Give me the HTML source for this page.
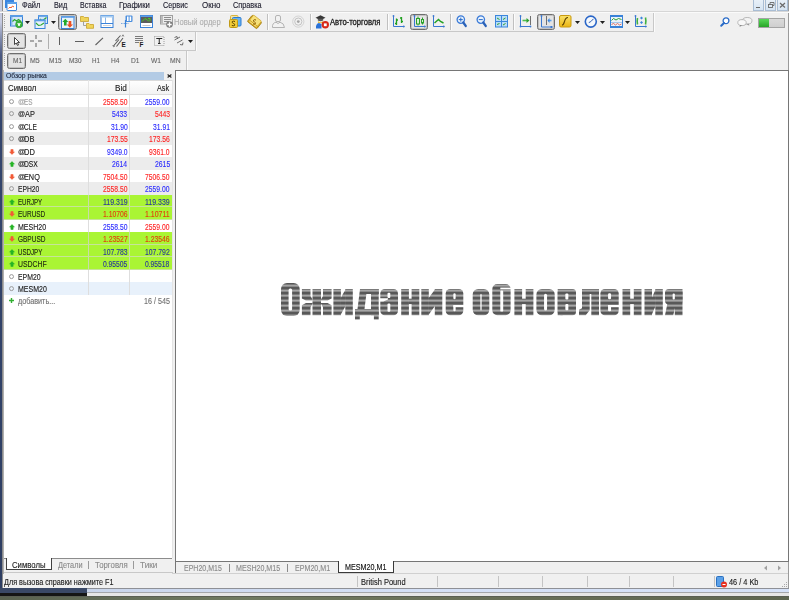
<!DOCTYPE html>
<html><head><meta charset="utf-8">
<style>
*{margin:0;padding:0;box-sizing:border-box}
html,body{width:789px;height:600px;overflow:hidden;background:#f0f0f0;font-family:"Liberation Sans",sans-serif;color:#000}
.a{position:absolute}
.t{position:absolute;white-space:nowrap;line-height:1;transform-origin:0 0;-webkit-text-stroke:0.12px currentColor}
svg.a{overflow:visible}
</style></head><body>

<div class="a" style="left:0;top:0;width:2px;height:589px;background:linear-gradient(#c6cbe0 0px,#c6cbe0 22px,#8a94b4 36px,#4a5880 55px,#34466e 120px,#2e3e62 589px)"></div>
<div class="a" style="left:2px;top:0px;width:1px;height:589px;background:#8c8c8c;"></div>
<div class="a" style="left:3px;top:13px;width:1px;height:576px;background:#e8e8e8;"></div>
<div class="a" style="left:0px;top:588px;width:789px;height:1px;background:#8e9096;"></div>
<div class="a" style="left:0;top:589px;width:789px;height:3px;background:linear-gradient(90deg,#c6d2e8,#d4e0f6 50%,#d6e2f8)"></div>
<div class="a" style="left:0px;top:592px;width:789px;height:1px;background:#a4a6aa;"></div>
<div class="a" style="left:0px;top:593px;width:789px;height:3px;background:#e6e6e6;"></div>
<div class="a" style="left:0px;top:588px;width:87px;height:5px;background:#3a4866;"></div>
<div class="a" style="left:0px;top:593px;width:87px;height:3px;background:#151515;"></div>
<div class="a" style="left:0px;top:596px;width:789px;height:1px;background:#5a5e52;"></div>
<div class="a" style="left:0;top:597px;width:789px;height:3px;background:linear-gradient(90deg,#5a6250,#707a60 30%,#6a7058 60%,#5e6650)"></div>
<div class="a" style="left:788px;top:0px;width:1px;height:588px;background:#9a9a9a;"></div>
<div class="a" style="left:0px;top:11px;width:789px;height:1px;background:#d6d6d6;"></div>
<div class="a" style="left:0px;top:12px;width:789px;height:1px;background:#fafafa;"></div>
<span class="t" style="left:22.19px;top:1.00px;font-size:8.43px;color:#1a1a2a;transform:scaleX(0.8890);">Файл</span>
<span class="t" style="left:53.62px;top:1.00px;font-size:8.43px;color:#1a1a2a;transform:scaleX(0.8671);">Вид</span>
<span class="t" style="left:79.93px;top:1.00px;font-size:8.43px;color:#1a1a2a;transform:scaleX(0.8419);">Вставка</span>
<span class="t" style="left:119.48px;top:1.00px;font-size:8.43px;color:#1a1a2a;transform:scaleX(0.9242);">Графики</span>
<span class="t" style="left:163.34px;top:1.00px;font-size:8.43px;color:#1a1a2a;transform:scaleX(0.8604);">Сервис</span>
<span class="t" style="left:201.84px;top:1.00px;font-size:8.43px;color:#1a1a2a;transform:scaleX(0.9426);">Окно</span>
<span class="t" style="left:233.33px;top:1.00px;font-size:8.43px;color:#1a1a2a;transform:scaleX(0.8674);">Справка</span>
<svg class="a" style="left:5px;top:0px;" width="12" height="11" viewBox="0 0 12 11">
<rect x="0" y="-3" width="9" height="11" fill="#3a86e0"/>
<rect x="2" y="2.5" width="9.5" height="8" rx="0.5" fill="#fff" stroke="#3a86e0" stroke-width="1"/>
<rect x="2" y="2" width="10" height="2" fill="#5aa0ea"/>
<path d="M3.5 8.5 L5 7 L6 8 L7.5 6 L9 7" stroke="#f06030" stroke-width="1" fill="none"/>
</svg>
<div class="a" style="left:753px;top:0px;width:11px;height:11px;background:linear-gradient(#e8f0f8,#d6e4f2);border:1px solid #a9bdd4;border-top:none"></div>
<div class="a" style="left:765px;top:0px;width:11px;height:11px;background:linear-gradient(#e8f0f8,#d6e4f2);border:1px solid #a9bdd4;border-top:none"></div>
<div class="a" style="left:777px;top:0px;width:11px;height:11px;background:linear-gradient(#e8f0f8,#d6e4f2);border:1px solid #a9bdd4;border-top:none"></div>
<svg class="a" style="left:753px;top:0px;" width="11" height="11" viewBox="0 0 11 11"><rect x="3" y="7" width="4" height="1" fill="#6a6a6a"/></svg>
<svg class="a" style="left:765px;top:0px;" width="11" height="11" viewBox="0 0 11 11"><rect x="3.5" y="4.5" width="4" height="3" fill="none" stroke="#6a6a6a" stroke-width="0.9"/><path d="M5 4.5 V2.5 H9 V5.5 H7.5" fill="none" stroke="#6a6a6a" stroke-width="0.9"/></svg>
<svg class="a" style="left:777px;top:0px;" width="11" height="11" viewBox="0 0 11 11"><path d="M3 3 L8 7.5 M8 3 L3 7.5" stroke="#6a6a6a" stroke-width="1.2"/></svg>
<div class="a" style="left:3px;top:13px;width:650px;height:18px;background:#f0f0f0;"></div>
<div class="a" style="left:653px;top:13px;width:1px;height:19px;background:#c8c8c8;"></div>
<div class="a" style="left:654px;top:13px;width:1px;height:19px;background:#fbfbfb;"></div>
<div class="a" style="left:3px;top:31px;width:650px;height:1px;background:#c8c8c8;"></div>
<div class="a" style="left:195px;top:32px;width:1px;height:19px;background:#c8c8c8;"></div>
<div class="a" style="left:196px;top:32px;width:1px;height:19px;background:#fbfbfb;"></div>
<div class="a" style="left:3px;top:50px;width:192px;height:1px;background:#c8c8c8;"></div>
<div class="a" style="left:186px;top:51px;width:1px;height:19px;background:#c8c8c8;"></div>
<div class="a" style="left:187px;top:51px;width:1px;height:19px;background:#fbfbfb;"></div>
<div class="a" style="left:4px;top:15px;width:1px;height:1px;background:#a8a8a8;"></div>
<div class="a" style="left:4px;top:17px;width:1px;height:1px;background:#a8a8a8;"></div>
<div class="a" style="left:4px;top:19px;width:1px;height:1px;background:#a8a8a8;"></div>
<div class="a" style="left:4px;top:21px;width:1px;height:1px;background:#a8a8a8;"></div>
<div class="a" style="left:4px;top:23px;width:1px;height:1px;background:#a8a8a8;"></div>
<div class="a" style="left:4px;top:25px;width:1px;height:1px;background:#a8a8a8;"></div>
<div class="a" style="left:4px;top:27px;width:1px;height:1px;background:#a8a8a8;"></div>
<div class="a" style="left:4px;top:34px;width:1px;height:1px;background:#a8a8a8;"></div>
<div class="a" style="left:4px;top:36px;width:1px;height:1px;background:#a8a8a8;"></div>
<div class="a" style="left:4px;top:38px;width:1px;height:1px;background:#a8a8a8;"></div>
<div class="a" style="left:4px;top:40px;width:1px;height:1px;background:#a8a8a8;"></div>
<div class="a" style="left:4px;top:42px;width:1px;height:1px;background:#a8a8a8;"></div>
<div class="a" style="left:4px;top:44px;width:1px;height:1px;background:#a8a8a8;"></div>
<div class="a" style="left:4px;top:46px;width:1px;height:1px;background:#a8a8a8;"></div>
<div class="a" style="left:4px;top:53px;width:1px;height:1px;background:#a8a8a8;"></div>
<div class="a" style="left:4px;top:55px;width:1px;height:1px;background:#a8a8a8;"></div>
<div class="a" style="left:4px;top:57px;width:1px;height:1px;background:#a8a8a8;"></div>
<div class="a" style="left:4px;top:59px;width:1px;height:1px;background:#a8a8a8;"></div>
<div class="a" style="left:4px;top:61px;width:1px;height:1px;background:#a8a8a8;"></div>
<div class="a" style="left:4px;top:63px;width:1px;height:1px;background:#a8a8a8;"></div>
<div class="a" style="left:4px;top:65px;width:1px;height:1px;background:#a8a8a8;"></div>
<svg class="a" style="left:9px;top:15px;" width="16" height="14" viewBox="0 0 16 14">
<rect x="1.5" y="0.5" width="12" height="10.5" fill="#d4e6f8" stroke="#3a82d8"/>
<rect x="1" y="0" width="13" height="2" fill="#5a9ce4"/>
<rect x="2" y="2" width="1.5" height="8.5" fill="#8ab8ea"/>
<path d="M3.5 6.5 L5.5 4.5 L7.5 6 L9.5 4.5 L12 6.5" stroke="#2ea82e" stroke-width="1.1" fill="none"/>
<circle cx="10" cy="9.4" r="3.4" fill="#3cb43c" stroke="#2a9a2a" stroke-width="0.6"/>
<path d="M8 8.3 H12 L10.8 9.8 V11 H9.2 V9.8 Z" fill="#fff"/>
</svg>
<svg class="a" style="left:25px;top:21px;" width="5" height="3" viewBox="0 0 5 3"><path d="M0 0 H5 L2.5 3 Z" fill="#202020"/></svg>
<svg class="a" style="left:34px;top:15px;" width="15" height="14" viewBox="0 0 15 14">
<rect x="4.5" y="0.5" width="9" height="8" fill="#d4e6f8" stroke="#3a82d8"/>
<rect x="4" y="0" width="10" height="1.8" fill="#5a9ce4"/>
<path d="M6 4 L8 6 L12.5 2.5" stroke="#2ea82e" stroke-width="1.1" fill="none"/>
<rect x="1" y="5" width="10" height="8.5" fill="#e6f1fc" stroke="#3a82d8"/>
<rect x="0.5" y="4.5" width="11" height="1.8" fill="#5a9ce4"/>
<path d="M2 8 L4.5 10.5 L7 10 L10 8" stroke="#2ea82e" stroke-width="1.1" fill="none"/>
</svg>
<svg class="a" style="left:51px;top:21px;" width="5" height="3" viewBox="0 0 5 3"><path d="M0 0 H5 L2.5 3 Z" fill="#202020"/></svg>
<div class="a" style="left:58px;top:14px;width:19px;height:16px;border:1px solid #6e6e6e;border-radius:2.5px;background:#e4e4e4;box-shadow:inset 0 0 0 1px #c2c2c2"></div>
<svg class="a" style="left:61px;top:16px;" width="14" height="13" viewBox="0 0 14 13">
<rect x="0.5" y="0.5" width="12.5" height="12" fill="#eaf3fc" stroke="#3a82d8"/>
<rect x="0" y="0" width="13.5" height="1.8" fill="#5a9ce4"/>
<path d="M4.3 2.8 L7.3 6 H5.6 V9.5 H3 V6 H1.3 Z" fill="#22a82a"/>
<path d="M8.8 11.8 L12 8.5 H10.3 V5 H7.6 V8.5 H5.8 Z" fill="#ec5022"/>
</svg>
<svg class="a" style="left:80px;top:15px;" width="14" height="14" viewBox="0 0 14 14">
<path d="M0.5 1.5 H3.5 L4.5 2.5 H8.5 V6.5 H0.5 Z" fill="#f0d458" stroke="#c9a22a" stroke-width="0.8"/>
<path d="M3.5 6.5 V10.5 H6" stroke="#a0a0a0" stroke-width="1" fill="none"/>
<path d="M6.5 8.5 H9 L10 9.5 H13.5 V13.3 H6.5 Z" fill="#f0d458" stroke="#c9a22a" stroke-width="0.8"/>
</svg>
<svg class="a" style="left:100px;top:15px;" width="14" height="13" viewBox="0 0 14 13">
<rect x="1" y="0.5" width="12" height="12" fill="#fff" stroke="#3a82d8"/>
<rect x="1" y="0.5" width="12" height="2" fill="#a8cdf2"/>
<rect x="5" y="2.5" width="1" height="5.5" fill="#8ab8ea"/>
<rect x="1" y="8" width="12" height="1" fill="#3a82d8"/>
<rect x="3" y="10" width="8" height="1" fill="#d4d4d4"/>
</svg>
<svg class="a" style="left:120px;top:15px;" width="14" height="14" viewBox="0 0 14 14">
<rect x="5.5" y="0.5" width="7" height="6.5" rx="1" fill="#4a8ede"/>
<rect x="7" y="1.5" width="1.6" height="4.5" fill="#fff"/><rect x="9.6" y="1.5" width="1.6" height="4.5" fill="#fff"/>
<path d="M1 8.5 H9" stroke="#7aa8e0" stroke-width="1" stroke-dasharray="1.5 1"/>
<path d="M5.5 5 V12.5" stroke="#3a82d8" stroke-width="1.2"/>
</svg>
<svg class="a" style="left:140px;top:15px;" width="13" height="13" viewBox="0 0 13 13">
<rect x="0.5" y="0.5" width="12" height="12" fill="#fff" stroke="#3a82d8"/>
<rect x="0.5" y="0.5" width="12" height="1.5" fill="#5a9ce4"/>
<rect x="1" y="2" width="11" height="6" fill="#5c5c5c"/>
<path d="M2 6.5 L5 3.5 L7.5 5 L9 6.5 M8 3.5 H10 V6" stroke="#44cc22" stroke-width="1" fill="none"/>
<rect x="2.5" y="10" width="8" height="1" fill="#c8c8c8"/>
</svg>
<svg class="a" style="left:159px;top:14px;" width="15" height="15" viewBox="0 0 15 15">
<rect x="1.5" y="1.5" width="12" height="8.5" fill="#ececec" stroke="#a0a0a0"/>
<rect x="2" y="2" width="2" height="7.5" fill="#bcbcbc"/>
<path d="M5 3.5 H12 M5 5.5 H12 M5 7.5 H10" stroke="#8c8c8c" stroke-width="1"/>
<circle cx="10.5" cy="10.5" r="3.3" fill="#7c7c7c"/>
<path d="M10.5 8.3 V12.7 M8.3 10.5 H12.7" stroke="#fff" stroke-width="1.3"/>
</svg>
<span class="t" style="left:173.89px;top:19.00px;font-size:8.14px;color:#aeaeae;transform:scaleX(0.9372);">Новый ордер</span>
<svg class="a" style="left:229px;top:15px;" width="13" height="13" viewBox="0 0 13 13">
<rect x="1.5" y="0.5" width="7.5" height="6" rx="1" fill="#f6e4a0" stroke="#d8b440"/>
<rect x="3.5" y="2.5" width="8.5" height="8.5" rx="1" fill="#6ab4f0" stroke="#2a7ad0"/>
<rect x="0.5" y="4.5" width="8" height="8" rx="1" fill="#f2cc38" stroke="#c09a18"/>
<path d="M6 6.5 Q4.5 5.8 3.3 6.5 Q2.5 7.5 4.5 8.5 Q6.5 9.3 5.5 10.5 Q4.3 11.2 2.8 10.4" stroke="#5a4500" stroke-width="1" fill="none"/>
</svg>
<svg class="a" style="left:247px;top:15px;" width="15" height="14" viewBox="0 0 15 14">
<g transform="rotate(38 7.5 7)">
<rect x="1.5" y="3" width="12" height="8" rx="1" fill="#d8a820" stroke="#a07a08" stroke-width="0.8"/>
<rect x="2.5" y="2" width="10" height="6.5" rx="0.8" fill="#f6e07a" stroke="#c89a18" stroke-width="0.6"/>
<path d="M3 9.5 H12" stroke="#fff3b0" stroke-width="0.8"/>
</g>
<path d="M9 5 Q7.3 4.2 6.5 5.3 Q6 6.5 7.6 7 Q9 7.6 8.2 8.8 Q7.2 9.6 6 8.9" stroke="#8a5a00" stroke-width="1" fill="none"/>
</svg>
<div class="a" style="left:267px;top:14px;width:1px;height:16px;background:#c0c0c0;"></div>
<div class="a" style="left:268px;top:14px;width:1px;height:16px;background:#fcfcfc;"></div>
<svg class="a" style="left:271px;top:15px;" width="15" height="13" viewBox="0 0 15 13">
<rect x="4.5" y="0.5" width="5" height="6" rx="1.5" fill="#f2f2f2" stroke="#b4b4b4"/>
<path d="M1.5 12.5 Q1 8 5 7.2 L7 8.5 L9 7.2 Q13 8 13.5 12.5 Z" fill="#f2f2f2" stroke="#b4b4b4"/>
</svg>
<svg class="a" style="left:292px;top:15px;" width="13" height="13" viewBox="0 0 13 13">
<circle cx="6.3" cy="6.6" r="5.6" fill="none" stroke="#cfcfcf" stroke-width="0.9"/>
<circle cx="6.3" cy="6.6" r="3.6" fill="none" stroke="#bdbdbd" stroke-width="0.9"/>
<circle cx="6.3" cy="6.6" r="1.4" fill="#a4a4a4"/>
</svg>
<div class="a" style="left:310px;top:14px;width:1px;height:16px;background:#c0c0c0;"></div>
<div class="a" style="left:311px;top:14px;width:1px;height:16px;background:#fcfcfc;"></div>
<svg class="a" style="left:315px;top:15px;" width="15" height="14" viewBox="0 0 15 14">
<path d="M0.5 2.8 L5.5 0.3 L10.5 2.8 L5.5 5.3 Z" fill="#383838"/>
<path d="M2.8 3.8 V5.6 Q5.5 7 8.2 5.6 V3.8" fill="#5a5a5a"/>
<path d="M3 6 Q5.5 8.5 8 6 V8 H3 Z" fill="#e8c040"/>
<path d="M1 13.5 Q0.5 8.5 4 8 L6.5 9 L6.5 13.5 Z" fill="#2a72d8"/>
<circle cx="10.3" cy="9.8" r="3.7" fill="#d82818"/>
<rect x="8.9" y="8.4" width="2.8" height="2.8" fill="#fff"/>
</svg>
<span class="t" style="left:330.40px;top:18.00px;font-size:8.43px;color:#1a1a1a;transform:scaleX(0.9058);-webkit-text-stroke:0.3px currentColor">Авто-торговля</span>
<div class="a" style="left:387px;top:14px;width:1px;height:16px;background:#c0c0c0;"></div>
<div class="a" style="left:388px;top:14px;width:1px;height:16px;background:#fcfcfc;"></div>
<svg class="a" style="left:392px;top:15px;" width="14" height="14" viewBox="0 0 14 14"><path d="M1.5 1 V11.5 H12" stroke="#3a78d0" stroke-width="1" fill="none"/><circle cx="1.5" cy="1" r="0.9" fill="#3a78d0"/><path d="M11.5 10 L13 11.5 L11.5 13 Z" fill="#3a78d0"/>
<path d="M4.5 3.5 V10 M3 8.5 H4.5 M4.5 5 H6 M9.5 2 V8 M8 3 H9.5 M9.5 6.5 H11" stroke="#22a022" stroke-width="1.3" fill="none"/>
</svg>
<div class="a" style="left:410px;top:14px;width:18px;height:16px;border:1px solid #6e6e6e;border-radius:2.5px;background:#e4e4e4;box-shadow:inset 0 0 0 1px #c2c2c2"></div>
<svg class="a" style="left:413px;top:15px;" width="14" height="14" viewBox="0 0 14 14"><path d="M1.5 1 V11.5 H12" stroke="#3a78d0" stroke-width="1" fill="none"/><circle cx="1.5" cy="1" r="0.9" fill="#3a78d0"/><path d="M11.5 10 L13 11.5 L11.5 13 Z" fill="#3a78d0"/>
<rect x="3.5" y="3.5" width="3" height="5.5" fill="#d8f2d0" stroke="#2aa02a"/>
<path d="M5 1.5 V3.5 M5 9 V10.5" stroke="#2aa02a"/>
<rect x="8.5" y="4.5" width="2" height="3.5" fill="#d8f2d0" stroke="#2aa02a"/>
<path d="M9.5 2.5 V4.5 M9.5 8 V9.5" stroke="#2aa02a"/>
</svg>
<svg class="a" style="left:432px;top:15px;" width="14" height="14" viewBox="0 0 14 14"><path d="M1.5 1 V11.5 H12" stroke="#3a78d0" stroke-width="1" fill="none"/><circle cx="1.5" cy="1" r="0.9" fill="#3a78d0"/><path d="M11.5 10 L13 11.5 L11.5 13 Z" fill="#3a78d0"/>
<path d="M2.5 8 L6.5 4.5 L8.5 6.5 L11.5 8" stroke="#22a022" stroke-width="1.4" fill="none"/>
</svg>
<div class="a" style="left:450px;top:14px;width:1px;height:16px;background:#c0c0c0;"></div>
<div class="a" style="left:451px;top:14px;width:1px;height:16px;background:#fcfcfc;"></div>
<svg class="a" style="left:456px;top:15px;" width="12" height="13" viewBox="0 0 12 13">
<circle cx="4.8" cy="4.6" r="3.7" fill="#e8f2fc" stroke="#3a7ad8" stroke-width="1.3"/>
<path d="M7.3 7.5 L9.8 11" stroke="#2a62b8" stroke-width="2.2" stroke-linecap="round"/>
<path d="M2.8 4.6 H6.8 M4.8 2.6 V6.6" stroke="#2a6cc8" stroke-width="1"/>
</svg>
<svg class="a" style="left:476px;top:15px;" width="12" height="13" viewBox="0 0 12 13">
<circle cx="4.8" cy="4.6" r="3.7" fill="#e8f2fc" stroke="#3a7ad8" stroke-width="1.3"/>
<path d="M7.3 7.5 L9.8 11" stroke="#2a62b8" stroke-width="2.2" stroke-linecap="round"/>
<path d="M2.8 4.6 H6.8" stroke="#2a6cc8" stroke-width="1"/>
</svg>
<svg class="a" style="left:495px;top:15px;" width="13" height="13" viewBox="0 0 13 13">
<rect x="0" y="0" width="13" height="12.5" fill="#3a86dc"/>
<rect x="1" y="1" width="5" height="5" fill="#b8dcf8"/><rect x="7" y="1" width="5" height="5" fill="#b8dcf8"/>
<rect x="1" y="7" width="5" height="4.5" fill="#b8dcf8"/><rect x="7" y="7" width="5" height="4.5" fill="#b8dcf8"/>
<path d="M2 3 L4.5 4.5 M8 4.5 L10.5 3 M2 9.5 L4.5 8.5 M8 10 L10.5 8.5" stroke="#30a030" stroke-width="1"/>
</svg>
<div class="a" style="left:513px;top:14px;width:1px;height:16px;background:#c0c0c0;"></div>
<div class="a" style="left:514px;top:14px;width:1px;height:16px;background:#fcfcfc;"></div>
<svg class="a" style="left:519px;top:15px;" width="14" height="14" viewBox="0 0 14 14">
<path d="M1.5 1 V11.5 H11.5" stroke="#3a78d0" stroke-width="1" fill="none"/><circle cx="1.5" cy="1" r="0.9" fill="#3a78d0"/><circle cx="1.5" cy="11.5" r="0.9" fill="#3a78d0"/><circle cx="11.5" cy="11.5" r="0.9" fill="#3a78d0"/>
<path d="M11.5 1 V10" stroke="#707070" stroke-width="1"/>
<path d="M3.5 5.5 H8.5" stroke="#50c050" stroke-width="1.6"/><path d="M7.5 3 L10.5 5.5 L7.5 8 Z" fill="#30a030"/>
</svg>
<div class="a" style="left:537px;top:14px;width:18px;height:16px;border:1px solid #6e6e6e;border-radius:2.5px;background:#e4e4e4;box-shadow:inset 0 0 0 1px #c2c2c2"></div>
<svg class="a" style="left:540px;top:15px;" width="14" height="14" viewBox="0 0 14 14">
<path d="M1.5 1 V12 H12" stroke="#3a78d0" stroke-width="1" fill="none"/><circle cx="1.5" cy="1" r="0.9" fill="#3a78d0"/><rect x="10.5" y="11" width="2" height="2" fill="#3a78d0"/>
<path d="M6.5 1 V10" stroke="#707070" stroke-width="1"/>
<path d="M8.5 5.5 H11.5" stroke="#5aa0ea" stroke-width="1.6"/><path d="M9.5 3 L7.5 5.5 L9.5 8 Z" fill="#3a86dc"/>
</svg>
<svg class="a" style="left:559px;top:15px;" width="13" height="13" viewBox="0 0 13 13">
<defs><linearGradient id="gf" x1="0" y1="0" x2="0" y2="1"><stop offset="0" stop-color="#fae26a"/><stop offset="1" stop-color="#eab410"/></linearGradient></defs>
<rect x="0.5" y="0.5" width="11.5" height="11.5" rx="1.5" fill="url(#gf)" stroke="#c89a10"/>
<path d="M3 10 Q4.5 10 5.5 6.5 Q6.5 2.5 9 2.5" stroke="#5a4000" stroke-width="1.1" fill="none"/>
</svg>
<svg class="a" style="left:575px;top:21px;" width="5" height="3" viewBox="0 0 5 3"><path d="M0 0 H5 L2.5 3 Z" fill="#202020"/></svg>
<svg class="a" style="left:584px;top:15px;" width="14" height="14" viewBox="0 0 14 14">
<circle cx="6.8" cy="6.6" r="5.5" fill="#f4f8fc" stroke="#2a66c8" stroke-width="1.6"/>
<path d="M6.8 6.6 L9.5 3.8 M6.8 6.6 L4.8 7.6" stroke="#2a5ab0" stroke-width="1"/>
</svg>
<svg class="a" style="left:600px;top:21px;" width="5" height="3" viewBox="0 0 5 3"><path d="M0 0 H5 L2.5 3 Z" fill="#202020"/></svg>
<svg class="a" style="left:610px;top:15px;" width="13" height="13" viewBox="0 0 13 13">
<rect x="0.5" y="0.5" width="12" height="12" fill="#eaf2fa" stroke="#3a82d8"/>
<rect x="0.5" y="0.5" width="12" height="1.5" fill="#3a82d8"/>
<path d="M1.5 5.5 L3.5 3.5 L6 5 L8.5 3.5 L11.5 4.5" stroke="#30a030" stroke-width="1" fill="none"/>
<path d="M1 7.5 H12" stroke="#a8c8e8" stroke-width="1"/>
<path d="M1.5 9.5 L3.5 8.5 L5.5 10 L7.5 8.5 L9.5 10 L11.5 9" stroke="#e06050" stroke-width="0.9" fill="none"/>
<rect x="0.5" y="11" width="12" height="1.5" fill="#3a82d8"/>
</svg>
<svg class="a" style="left:625px;top:21px;" width="5" height="3" viewBox="0 0 5 3"><path d="M0 0 H5 L2.5 3 Z" fill="#202020"/></svg>
<svg class="a" style="left:634px;top:15px;" width="14" height="14" viewBox="0 0 14 14">
<path d="M1.5 1 V11.5 H12" stroke="#3a78d0" stroke-width="1" fill="none"/><circle cx="1.5" cy="1" r="0.9" fill="#3a78d0"/><path d="M11.5 10 L13 11.5 L11.5 13 Z" fill="#3a78d0"/>
<path d="M3.5 3 Q2.8 6 3.5 9.5" stroke="#40b040" stroke-width="1.6" fill="none"/>
<path d="M11.5 2.5 Q12.3 6 11.5 9.5" stroke="#40b040" stroke-width="1.6" fill="none"/>
<path d="M7.5 1.5 L9 3 L7.5 4.5 L6 3 Z M7.5 6 L9 7.5 L7.5 9 L6 7.5 Z" fill="#3a86dc"/>
</svg>
<svg class="a" style="left:720px;top:17px;" width="10" height="10" viewBox="0 0 10 10">
<circle cx="6" cy="3.8" r="2.9" fill="#fff" stroke="#2a6cc8" stroke-width="1.3"/>
<path d="M4 6 L1.2 8.8" stroke="#2a6cc8" stroke-width="2" stroke-linecap="round"/>
</svg>
<svg class="a" style="left:737px;top:17px;" width="16" height="10" viewBox="0 0 16 10">
<ellipse cx="10.2" cy="3.8" rx="4.8" ry="3.3" fill="#f4f4f4" stroke="#a8a8a8" stroke-width="0.8"/>
<path d="M11.5 6.8 L12.3 8.8 L9.5 7" fill="#8a8a8a"/>
<ellipse cx="5" cy="5.6" rx="4.2" ry="3" fill="#f8f8f8" stroke="#a8a8a8" stroke-width="0.8"/>
<path d="M3 8.3 L2.6 9.8 L5 8.5" fill="#707070"/>
</svg>
<div class="a" style="left:758px;top:18px;width:27px;height:10px;background:linear-gradient(#dadada,#cfcfcf);border:1px solid #a4a4a4"></div>
<div class="a" style="left:759px;top:19px;width:10px;height:8px;background:linear-gradient(#58d858,#28a428)"></div>
<div class="a" style="left:7px;top:33px;width:19px;height:16px;border:1px solid #6e6e6e;border-radius:2.5px;background:#e4e4e4;box-shadow:inset 0 0 0 1px #c2c2c2"></div>
<svg class="a" style="left:13px;top:37px;" width="8" height="9" viewBox="0 0 8 9"><path d="M1.5 0.5 V7.5 L3.2 6 L4.5 8.5 L5.5 8 L4.4 5.5 H6.5 Z" fill="#fff" stroke="#303030" stroke-width="0.9"/></svg>
<svg class="a" style="left:29px;top:34px;" width="14" height="14" viewBox="0 0 14 14"><path d="M1 7 H5 M9 7 H13 M7 1 V5 M7 9 V13" stroke="#606060" stroke-width="1"/></svg>
<div class="a" style="left:48px;top:34px;width:1px;height:15px;background:#b0b0b0;"></div>
<div class="a" style="left:59px;top:37px;width:1px;height:8px;background:#606060;"></div>
<div class="a" style="left:75px;top:41px;width:9px;height:1px;background:#606060;"></div>
<svg class="a" style="left:95px;top:37px;" width="9" height="9" viewBox="0 0 9 9"><path d="M0.5 8 L8 0.8" stroke="#606060" stroke-width="1.1"/></svg>
<svg class="a" style="left:112px;top:34px;" width="15" height="13" viewBox="0 0 15 13">
<path d="M1.5 12 L7 5.5 M4.5 12.5 L11 4 M3.5 7 L8.5 1.5" stroke="#5a5a5a" stroke-width="1.1"/>
<path d="M10 2.5 L11 0.8 L11.8 2.5 M0.8 11 L1.5 12.8 L3 12" stroke="#6a6a6a" stroke-width="0.8" fill="none"/>
<text x="9.6" y="12.7" font-size="6.4" font-weight="bold" font-family="Liberation Sans" fill="#1a1a1a">E</text>
</svg>
<svg class="a" style="left:134px;top:35px;" width="11" height="12" viewBox="0 0 11 12">
<path d="M1 1.5 H9 M1 3.5 H9 M1 5.5 H9 M1 7.5 H5" stroke="#7a7a7a" stroke-width="1"/>
<text x="5.6" y="11.7" font-size="6.4" font-weight="bold" font-family="Liberation Sans" fill="#1a1a1a">F</text>
</svg>
<svg class="a" style="left:154px;top:36px;" width="11" height="10" viewBox="0 0 11 10">
<path d="M0.5 0.5 H10 V9.5 H0.5 Z" fill="none" stroke="#9a9a9a" stroke-width="1" stroke-dasharray="1 1"/>
<path d="M2.5 3 V2.5 H8 V3 M5.25 2.5 V7.5 M4 7.5 H6.5" stroke="#2a2a2a" stroke-width="1" fill="none"/>
</svg>
<svg class="a" style="left:174px;top:36px;" width="10" height="10" viewBox="0 0 10 10">
<path d="M0.5 1.5 L3 0.5 L3.5 3 M0.5 4 L6 1 M3 7 L8.5 4 M6 8.5 L8.5 9 L9 6.5" stroke="#606060" stroke-width="0.9" fill="none"/>
</svg>
<svg class="a" style="left:188px;top:40px;" width="5" height="3" viewBox="0 0 5 3"><path d="M0 0 H5 L2.5 3 Z" fill="#202020"/></svg>
<div class="a" style="left:7px;top:53px;width:19px;height:16px;border:1px solid #6e6e6e;border-radius:2.5px;background:#e4e4e4;box-shadow:inset 0 0 0 1px #c2c2c2"></div>
<span class="t" style="left:12.68px;top:57.00px;font-size:7.70px;color:#646464;transform:scaleX(0.8517);">M1</span>
<span class="t" style="left:30.44px;top:57.00px;font-size:7.70px;color:#646464;transform:scaleX(0.9097);">M5</span>
<span class="t" style="left:49.47px;top:57.00px;font-size:7.70px;color:#646464;transform:scaleX(0.8536);">M15</span>
<span class="t" style="left:69.38px;top:57.00px;font-size:7.70px;color:#646464;transform:scaleX(0.8370);">M30</span>
<span class="t" style="left:91.70px;top:57.00px;font-size:7.70px;color:#646464;transform:scaleX(0.8127);">H1</span>
<span class="t" style="left:111.07px;top:57.00px;font-size:7.70px;color:#646464;transform:scaleX(0.8580);">H4</span>
<span class="t" style="left:131.26px;top:57.00px;font-size:7.70px;color:#646464;transform:scaleX(0.8692);">D1</span>
<span class="t" style="left:150.67px;top:57.00px;font-size:7.70px;color:#646464;transform:scaleX(0.8684);">W1</span>
<span class="t" style="left:170.36px;top:57.00px;font-size:7.70px;color:#646464;transform:scaleX(0.8840);">MN</span>
<div class="a" style="left:3px;top:70px;width:1px;height:504px;background:#b0b0b0;"></div>
<div class="a" style="left:4px;top:72px;width:160px;height:8px;background:#b3cbe5;"></div>
<span class="t" style="left:5.59px;top:72.00px;font-size:7.27px;color:#1c2438;transform:scaleX(0.9366);">Обзор рынка</span>
<svg class="a" style="left:166px;top:73px;" width="7" height="6" viewBox="0 0 7 6"><path d="M1.6 1.5 L5.4 4.5 M5.4 1.5 L1.6 4.5" stroke="#282828" stroke-width="1.15"/></svg>
<div class="a" style="left:4px;top:80px;width:168px;height:478px;background:#ffffff;"></div>
<div class="a" style="left:172px;top:80px;width:1px;height:478px;background:#e4e4e4;"></div>
<div class="a" style="left:4px;top:80px;width:168px;height:14px;background:linear-gradient(#ffffff,#f3f3f3)"></div>
<div class="a" style="left:4px;top:80px;width:168px;height:1px;background:#dadada;"></div>
<div class="a" style="left:4px;top:94px;width:168px;height:1px;background:#dcdcdc;"></div>
<div class="a" style="left:88px;top:80px;width:1px;height:14px;background:#e6e6e6;"></div>
<div class="a" style="left:129px;top:80px;width:1px;height:14px;background:#e6e6e6;"></div>
<span class="t" style="left:8.31px;top:84.00px;font-size:8.72px;color:#1a1a1a;transform:scaleX(0.9002);">Символ</span>
<span class="t" style="left:114.64px;top:84.00px;font-size:8.72px;color:#1a1a1a;transform:scaleX(0.9438);">Bid</span>
<span class="t" style="left:157.00px;top:84.00px;font-size:8.72px;color:#1a1a1a;transform:scaleX(0.8264);">Ask</span>
<div class="a" style="left:4px;top:95px;width:168px;height:12px;background:#ffffff;"></div>
<div class="a" style="left:88px;top:95px;width:1px;height:12px;background:#dedede;"></div>
<div class="a" style="left:129px;top:95px;width:1px;height:12px;background:#dedede;"></div>
<span class="t" style="left:17.64px;top:98px;font-size:7.28px;color:#a0a0a0;transform:scaleX(0.969)">@</span>
<span class="t" style="left:24.29px;top:99.00px;font-size:8.14px;color:#a0a0a0;transform:scaleX(0.7851);">ES</span>
<span class="t" style="left:102.98px;top:99.00px;font-size:8.14px;color:#ff2222;transform:scaleX(0.8311);">2558.50</span>
<span class="t" style="left:145.38px;top:99.00px;font-size:8.14px;color:#2a2aff;transform:scaleX(0.8311);">2559.00</span>
<svg class="a" style="left:9px;top:98.8px;" width="6" height="6" viewBox="0 0 6 6"><circle cx="2.5" cy="2.6" r="2" fill="none" stroke="#9a9a9a" stroke-width="1"/></svg>
<div class="a" style="left:4px;top:107px;width:168px;height:13px;background:#ececec;"></div>
<div class="a" style="left:88px;top:107px;width:1px;height:13px;background:#dedede;"></div>
<div class="a" style="left:129px;top:107px;width:1px;height:13px;background:#dedede;"></div>
<span class="t" style="left:17.64px;top:110px;font-size:7.28px;color:#1a1a1a;transform:scaleX(0.969)">@</span>
<span class="t" style="left:24.80px;top:111.00px;font-size:8.14px;color:#1a1a1a;transform:scaleX(0.9022);">AP</span>
<span class="t" style="left:112.31px;top:111.00px;font-size:8.14px;color:#2a2aff;transform:scaleX(0.8374);">5433</span>
<span class="t" style="left:154.71px;top:111.00px;font-size:8.14px;color:#ff2222;transform:scaleX(0.8374);">5443</span>
<svg class="a" style="left:9px;top:111.28px;" width="6" height="6" viewBox="0 0 6 6"><circle cx="2.5" cy="2.6" r="2" fill="none" stroke="#9a9a9a" stroke-width="1"/></svg>
<div class="a" style="left:4px;top:120px;width:168px;height:12px;background:#ffffff;"></div>
<div class="a" style="left:88px;top:120px;width:1px;height:12px;background:#dedede;"></div>
<div class="a" style="left:129px;top:120px;width:1px;height:12px;background:#dedede;"></div>
<span class="t" style="left:17.64px;top:123px;font-size:7.28px;color:#1a1a1a;transform:scaleX(0.969)">@</span>
<span class="t" style="left:24.47px;top:124.00px;font-size:8.14px;color:#1a1a1a;transform:scaleX(0.8080);">CLE</span>
<span class="t" style="left:110.61px;top:124.00px;font-size:8.14px;color:#2a2aff;transform:scaleX(0.8268);">31.90</span>
<span class="t" style="left:153.01px;top:124.00px;font-size:8.14px;color:#2a2aff;transform:scaleX(0.8302);">31.91</span>
<svg class="a" style="left:9px;top:123.75999999999999px;" width="6" height="6" viewBox="0 0 6 6"><circle cx="2.5" cy="2.6" r="2" fill="none" stroke="#9a9a9a" stroke-width="1"/></svg>
<div class="a" style="left:4px;top:132px;width:168px;height:13px;background:#ececec;"></div>
<div class="a" style="left:88px;top:132px;width:1px;height:13px;background:#dedede;"></div>
<div class="a" style="left:129px;top:132px;width:1px;height:13px;background:#dedede;"></div>
<span class="t" style="left:17.64px;top:135px;font-size:7.28px;color:#1a1a1a;transform:scaleX(0.969)">@</span>
<span class="t" style="left:24.20px;top:136.00px;font-size:8.14px;color:#1a1a1a;transform:scaleX(0.9202);">DB</span>
<span class="t" style="left:106.59px;top:136.00px;font-size:8.14px;color:#ff2222;transform:scaleX(0.8385);">173.55</span>
<span class="t" style="left:148.99px;top:136.00px;font-size:8.14px;color:#ff2222;transform:scaleX(0.8385);">173.56</span>
<svg class="a" style="left:9px;top:136.24px;" width="6" height="6" viewBox="0 0 6 6"><circle cx="2.5" cy="2.6" r="2" fill="none" stroke="#9a9a9a" stroke-width="1"/></svg>
<div class="a" style="left:4px;top:145px;width:168px;height:12px;background:#ffffff;"></div>
<div class="a" style="left:88px;top:145px;width:1px;height:12px;background:#dedede;"></div>
<div class="a" style="left:129px;top:145px;width:1px;height:12px;background:#dedede;"></div>
<span class="t" style="left:17.64px;top:148px;font-size:7.28px;color:#1a1a1a;transform:scaleX(0.969)">@</span>
<span class="t" style="left:24.20px;top:149.00px;font-size:8.14px;color:#1a1a1a;transform:scaleX(0.9249);">DD</span>
<span class="t" style="left:106.80px;top:149.00px;font-size:8.14px;color:#2a2aff;transform:scaleX(0.8287);">9349.0</span>
<span class="t" style="left:149.20px;top:149.00px;font-size:8.14px;color:#ff2222;transform:scaleX(0.8287);">9361.0</span>
<svg class="a" style="left:8.5px;top:148.72px;" width="7" height="7" viewBox="0 0 7 7"><path d="M3 5.4 L5.4 2.9 H4.1 V0.6 H1.9 V2.9 H0.6 Z" fill="#f25a36" stroke="#f25a36" stroke-width="0.6" stroke-linejoin="round"/></svg>
<div class="a" style="left:4px;top:157px;width:168px;height:13px;background:#ececec;"></div>
<div class="a" style="left:88px;top:157px;width:1px;height:13px;background:#dedede;"></div>
<div class="a" style="left:129px;top:157px;width:1px;height:13px;background:#dedede;"></div>
<span class="t" style="left:17.64px;top:160px;font-size:7.28px;color:#1a1a1a;transform:scaleX(0.969)">@</span>
<span class="t" style="left:24.26px;top:161.00px;font-size:8.14px;color:#1a1a1a;transform:scaleX(0.8295);">DSX</span>
<span class="t" style="left:112.24px;top:161.00px;font-size:8.14px;color:#2a2aff;transform:scaleX(0.8374);">2614</span>
<span class="t" style="left:154.64px;top:161.00px;font-size:8.14px;color:#2a2aff;transform:scaleX(0.8413);">2615</span>
<svg class="a" style="left:8.5px;top:161.2px;" width="7" height="7" viewBox="0 0 7 7"><path d="M3 0.6 L5.4 3.1 H4.1 V5.4 H1.9 V3.1 H0.6 Z" fill="#26b426" stroke="#26b426" stroke-width="0.6" stroke-linejoin="round"/></svg>
<div class="a" style="left:4px;top:170px;width:168px;height:12px;background:#ffffff;"></div>
<div class="a" style="left:88px;top:170px;width:1px;height:12px;background:#dedede;"></div>
<div class="a" style="left:129px;top:170px;width:1px;height:12px;background:#dedede;"></div>
<span class="t" style="left:17.64px;top:173px;font-size:7.28px;color:#1a1a1a;transform:scaleX(0.969)">@</span>
<span class="t" style="left:24.22px;top:174.00px;font-size:8.14px;color:#1a1a1a;transform:scaleX(0.8973);">ENQ</span>
<span class="t" style="left:102.98px;top:174.00px;font-size:8.14px;color:#ff2222;transform:scaleX(0.8311);">7504.50</span>
<span class="t" style="left:145.38px;top:174.00px;font-size:8.14px;color:#ff2222;transform:scaleX(0.8311);">7506.50</span>
<svg class="a" style="left:8.5px;top:173.68px;" width="7" height="7" viewBox="0 0 7 7"><path d="M3 5.4 L5.4 2.9 H4.1 V0.6 H1.9 V2.9 H0.6 Z" fill="#f25a36" stroke="#f25a36" stroke-width="0.6" stroke-linejoin="round"/></svg>
<div class="a" style="left:4px;top:182px;width:168px;height:13px;background:#ececec;"></div>
<div class="a" style="left:88px;top:182px;width:1px;height:13px;background:#dedede;"></div>
<div class="a" style="left:129px;top:182px;width:1px;height:13px;background:#dedede;"></div>
<span class="t" style="left:17.66px;top:186.00px;font-size:8.14px;color:#1a1a1a;transform:scaleX(0.8298);">EPH20</span>
<span class="t" style="left:102.98px;top:186.00px;font-size:8.14px;color:#ff2222;transform:scaleX(0.8311);">2558.50</span>
<span class="t" style="left:145.38px;top:186.00px;font-size:8.14px;color:#2a2aff;transform:scaleX(0.8311);">2559.00</span>
<svg class="a" style="left:9px;top:186.16px;" width="6" height="6" viewBox="0 0 6 6"><circle cx="2.5" cy="2.6" r="2" fill="none" stroke="#9a9a9a" stroke-width="1"/></svg>
<div class="a" style="left:4px;top:195px;width:168px;height:12px;background:#aaf534;"></div>
<div class="a" style="left:88px;top:195px;width:1px;height:12px;background:#c8dca8;"></div>
<div class="a" style="left:129px;top:195px;width:1px;height:12px;background:#c8dca8;"></div>
<div class="a" style="left:4px;top:206px;width:168px;height:1px;background:#c6e49a;"></div>
<span class="t" style="left:17.71px;top:199.00px;font-size:8.14px;color:#1e2612;transform:scaleX(0.7509);">EURJPY</span>
<span class="t" style="left:102.80px;top:199.00px;font-size:8.14px;color:#28369c;transform:scaleX(0.8578);">119.319</span>
<span class="t" style="left:145.20px;top:199.00px;font-size:8.14px;color:#28369c;transform:scaleX(0.8578);">119.339</span>
<svg class="a" style="left:8.5px;top:198.64px;" width="7" height="7" viewBox="0 0 7 7"><path d="M3 0.6 L5.4 3.1 H4.1 V5.4 H1.9 V3.1 H0.6 Z" fill="#26b426" stroke="#26b426" stroke-width="0.6" stroke-linejoin="round"/></svg>
<div class="a" style="left:4px;top:207px;width:168px;height:13px;background:#aaf534;"></div>
<div class="a" style="left:88px;top:207px;width:1px;height:13px;background:#c8dca8;"></div>
<div class="a" style="left:129px;top:207px;width:1px;height:13px;background:#c8dca8;"></div>
<div class="a" style="left:4px;top:219px;width:168px;height:1px;background:#c6e49a;"></div>
<span class="t" style="left:17.68px;top:211.00px;font-size:8.14px;color:#1e2612;transform:scaleX(0.7950);">EURUSD</span>
<span class="t" style="left:102.81px;top:211.00px;font-size:8.14px;color:#e0400e;transform:scaleX(0.8382);">1.10706</span>
<span class="t" style="left:145.20px;top:211.00px;font-size:8.14px;color:#e0400e;transform:scaleX(0.8578);">1.10711</span>
<svg class="a" style="left:8.5px;top:211.12px;" width="7" height="7" viewBox="0 0 7 7"><path d="M3 5.4 L5.4 2.9 H4.1 V0.6 H1.9 V2.9 H0.6 Z" fill="#f25a36" stroke="#f25a36" stroke-width="0.6" stroke-linejoin="round"/></svg>
<div class="a" style="left:4px;top:220px;width:168px;height:12px;background:#ffffff;"></div>
<div class="a" style="left:88px;top:220px;width:1px;height:12px;background:#dedede;"></div>
<div class="a" style="left:129px;top:220px;width:1px;height:12px;background:#dedede;"></div>
<span class="t" style="left:17.64px;top:224.00px;font-size:8.14px;color:#1a1a1a;transform:scaleX(0.8633);">MESH20</span>
<span class="t" style="left:102.98px;top:224.00px;font-size:8.14px;color:#2a2aff;transform:scaleX(0.8311);">2558.50</span>
<span class="t" style="left:145.38px;top:224.00px;font-size:8.14px;color:#ff2222;transform:scaleX(0.8311);">2559.00</span>
<svg class="a" style="left:8.5px;top:223.60000000000002px;" width="7" height="7" viewBox="0 0 7 7"><path d="M3 0.6 L5.4 3.1 H4.1 V5.4 H1.9 V3.1 H0.6 Z" fill="#26b426" stroke="#26b426" stroke-width="0.6" stroke-linejoin="round"/></svg>
<div class="a" style="left:4px;top:232px;width:168px;height:13px;background:#aaf534;"></div>
<div class="a" style="left:88px;top:232px;width:1px;height:13px;background:#c8dca8;"></div>
<div class="a" style="left:129px;top:232px;width:1px;height:13px;background:#c8dca8;"></div>
<div class="a" style="left:4px;top:244px;width:168px;height:1px;background:#c6e49a;"></div>
<span class="t" style="left:17.88px;top:236.00px;font-size:8.14px;color:#1e2612;transform:scaleX(0.7982);">GBPUSD</span>
<span class="t" style="left:102.81px;top:236.00px;font-size:8.14px;color:#e0400e;transform:scaleX(0.8406);">1.23527</span>
<span class="t" style="left:145.21px;top:236.00px;font-size:8.14px;color:#e0400e;transform:scaleX(0.8382);">1.23546</span>
<svg class="a" style="left:8.5px;top:236.07999999999998px;" width="7" height="7" viewBox="0 0 7 7"><path d="M3 5.4 L5.4 2.9 H4.1 V0.6 H1.9 V2.9 H0.6 Z" fill="#f25a36" stroke="#f25a36" stroke-width="0.6" stroke-linejoin="round"/></svg>
<div class="a" style="left:4px;top:245px;width:168px;height:12px;background:#aaf534;"></div>
<div class="a" style="left:88px;top:245px;width:1px;height:12px;background:#c8dca8;"></div>
<div class="a" style="left:129px;top:245px;width:1px;height:12px;background:#c8dca8;"></div>
<div class="a" style="left:4px;top:256px;width:168px;height:1px;background:#c6e49a;"></div>
<span class="t" style="left:17.74px;top:249.00px;font-size:8.14px;color:#1e2612;transform:scaleX(0.7595);">USDJPY</span>
<span class="t" style="left:102.81px;top:249.00px;font-size:8.14px;color:#28369c;transform:scaleX(0.8382);">107.783</span>
<span class="t" style="left:145.21px;top:249.00px;font-size:8.14px;color:#28369c;transform:scaleX(0.8406);">107.792</span>
<svg class="a" style="left:8.5px;top:248.56px;" width="7" height="7" viewBox="0 0 7 7"><path d="M3 0.6 L5.4 3.1 H4.1 V5.4 H1.9 V3.1 H0.6 Z" fill="#26b426" stroke="#26b426" stroke-width="0.6" stroke-linejoin="round"/></svg>
<div class="a" style="left:4px;top:257px;width:168px;height:13px;background:#aaf534;"></div>
<div class="a" style="left:88px;top:257px;width:1px;height:13px;background:#c8dca8;"></div>
<div class="a" style="left:129px;top:257px;width:1px;height:13px;background:#c8dca8;"></div>
<div class="a" style="left:4px;top:269px;width:168px;height:1px;background:#c6e49a;"></div>
<span class="t" style="left:17.68px;top:261.00px;font-size:8.14px;color:#1e2612;transform:scaleX(0.8494);">USDCHF</span>
<span class="t" style="left:103.05px;top:261.00px;font-size:8.14px;color:#28369c;transform:scaleX(0.8299);">0.95505</span>
<span class="t" style="left:145.45px;top:261.00px;font-size:8.14px;color:#28369c;transform:scaleX(0.8299);">0.95518</span>
<svg class="a" style="left:8.5px;top:261.04px;" width="7" height="7" viewBox="0 0 7 7"><path d="M3 0.6 L5.4 3.1 H4.1 V5.4 H1.9 V3.1 H0.6 Z" fill="#26b426" stroke="#26b426" stroke-width="0.6" stroke-linejoin="round"/></svg>
<div class="a" style="left:4px;top:270px;width:168px;height:12px;background:#ffffff;"></div>
<div class="a" style="left:88px;top:270px;width:1px;height:12px;background:#dedede;"></div>
<div class="a" style="left:129px;top:270px;width:1px;height:12px;background:#dedede;"></div>
<span class="t" style="left:17.65px;top:274.00px;font-size:8.14px;color:#1a1a1a;transform:scaleX(0.8462);">EPM20</span>
<svg class="a" style="left:9px;top:273.52px;" width="6" height="6" viewBox="0 0 6 6"><circle cx="2.5" cy="2.6" r="2" fill="none" stroke="#9a9a9a" stroke-width="1"/></svg>
<div class="a" style="left:4px;top:282px;width:168px;height:13px;background:#e8f1fb;"></div>
<div class="a" style="left:88px;top:282px;width:1px;height:13px;background:#dedede;"></div>
<div class="a" style="left:129px;top:282px;width:1px;height:13px;background:#dedede;"></div>
<span class="t" style="left:17.64px;top:286.00px;font-size:8.14px;color:#1a1a1a;transform:scaleX(0.8611);">MESM20</span>
<svg class="a" style="left:9px;top:286.0px;" width="6" height="6" viewBox="0 0 6 6"><circle cx="2.5" cy="2.6" r="2" fill="none" stroke="#9a9a9a" stroke-width="1"/></svg>
<svg class="a" style="left:9px;top:298.48px;" width="6" height="6" viewBox="0 0 6 6"><path d="M2.5 0 V5 M0 2.5 H5" stroke="#30b030" stroke-width="1.4"/></svg>
<span class="t" style="left:18.23px;top:298.00px;font-size:8.14px;color:#707070;transform:scaleX(0.8889);">добавить...</span>
<span class="t" style="left:143.76px;top:298.00px;font-size:8.14px;color:#707070;transform:scaleX(0.8811);">16 / 545</span>
<div class="a" style="left:4px;top:558px;width:168px;height:1px;background:#8c8c8c;"></div>
<div class="a" style="left:4px;top:559px;width:168px;height:14px;background:#f0f0f0;"></div>
<div class="a" style="left:6px;top:558px;width:46px;height:12px;background:#fff;border:1px solid #404040;border-top:none"></div>
<span class="t" style="left:12.21px;top:561.00px;font-size:8.43px;color:#1a1a1a;transform:scaleX(0.9196);">Символы</span>
<span class="t" style="left:58.16px;top:561.00px;font-size:8.43px;color:#8a8a8a;transform:scaleX(0.8706);">Детали</span>
<div class="a" style="left:88px;top:561px;width:1px;height:8px;background:#9a9a9a;"></div>
<span class="t" style="left:94.54px;top:561.00px;font-size:8.43px;color:#8a8a8a;transform:scaleX(0.9281);">Торговля</span>
<div class="a" style="left:133px;top:561px;width:1px;height:8px;background:#9a9a9a;"></div>
<span class="t" style="left:139.54px;top:561.00px;font-size:8.43px;color:#8a8a8a;transform:scaleX(0.9734);">Тики</span>
<div class="a" style="left:4px;top:572px;width:169px;height:1px;background:#c8c8c8;"></div>
<div class="a" style="left:175px;top:70px;width:614px;height:492px;background:#fff;border:1px solid #767676"></div>
<svg class="a" style="left:0;top:0" width="789" height="600" viewBox="0 0 789 600"><defs><pattern id="stp" patternUnits="userSpaceOnUse" x="0" y="0" width="40" height="5">
<rect x="0" y="0" width="40" height="1" fill="#a6a6a6"/><rect x="0" y="1" width="40" height="1" fill="#8a8a8a"/>
<rect x="0" y="2" width="40" height="2" fill="#585858"/><rect x="0" y="4" width="40" height="1" fill="#7a7a7a"/></pattern>
<mask id="gm"><g fill="#fff"><rect x="281.00" y="283.00" width="18.70" height="33.00" rx="6" ry="6"/><rect x="288.60" y="288.50" width="3.50" height="22.00" rx="1.5" fill="#000"/><rect x="312.50" y="289.00" width="8.50" height="26.30"/><path d="M301.90 289.00 L310.50 289.00 L310.50 296.00 L312.50 299.50 L312.50 300.50 L305.90 300.50 L301.90 298.50 Z"/><path d="M301.90 315.30 L310.50 315.30 L310.50 307.30 L312.50 303.80 L312.50 303.00 L305.90 303.00 L301.90 305.30 Z"/><path d="M331.60 289.00 L323.00 289.00 L323.00 296.00 L321.00 299.50 L321.00 300.50 L327.60 300.50 L331.60 298.50 Z"/><path d="M331.60 315.30 L323.00 315.30 L323.00 307.30 L321.00 303.80 L321.00 303.00 L327.60 303.00 L331.60 305.30 Z"/><rect x="333.40" y="289.00" width="7.50" height="26.30"/><rect x="345.30" y="289.00" width="7.50" height="26.30"/><path d="M340.40 298.50 L345.80 289.00 L345.80 305.50 L340.40 315.30 Z"/><rect x="371.00" y="289.00" width="7.70" height="26.30"/><rect x="360.00" y="289.00" width="18.70" height="5.00"/><path d="M360.00 289.00 L367.00 289.00 L364.50 309.30 L357.50 309.30 Z"/><rect x="355.00" y="309.10" width="23.70" height="6.20"/><rect x="355.00" y="314.30" width="4.80" height="5.20"/><rect x="373.90" y="314.30" width="4.80" height="5.20"/><rect x="380.30" y="289.00" width="17.70" height="26.30" rx="4.5" ry="4.5"/><rect x="387.50" y="292.80" width="2.80" height="5.30" rx="1" fill="#000"/><rect x="387.50" y="303.50" width="2.80" height="8.30" rx="1" fill="#000"/><path d="M379.80 298.20 L388.00 298.20 L388.00 299.50 L383.30 301.50 L379.80 301.50 Z" fill="#000"/><rect x="401.20" y="289.00" width="7.70" height="26.30"/><rect x="411.60" y="289.00" width="7.70" height="26.30"/><rect x="408.40" y="298.70" width="3.70" height="5.40"/><rect x="421.30" y="289.00" width="7.50" height="26.30"/><rect x="434.80" y="289.00" width="7.50" height="26.30"/><path d="M428.30 298.50 L435.30 289.00 L435.30 305.50 L428.30 315.30 Z"/><rect x="445.70" y="289.00" width="17.60" height="26.30" rx="4.5" ry="4.5"/><rect x="453.35" y="293.20" width="2.30" height="6.00" rx="1.2" fill="#000"/><rect x="453.35" y="305.00" width="10.95" height="2.20" rx="0" fill="#000"/><rect x="453.35" y="305.00" width="2.30" height="6.30" rx="1" fill="#000"/><rect x="472.70" y="289.00" width="16.60" height="26.30" rx="5.5" ry="5.5"/><rect x="480.35" y="293.80" width="1.30" height="16.70" rx="1.5" fill="#000"/><rect x="492.30" y="284.10" width="18.30" height="31.20" rx="5" ry="5"/><rect x="500.30" y="287.60" width="11.30" height="1.70" rx="0" fill="#000"/><rect x="500.30" y="290.60" width="2.90" height="21.00" rx="1.2" fill="#000"/><rect x="514.40" y="289.00" width="7.70" height="26.30"/><rect x="525.70" y="289.00" width="7.70" height="26.30"/><rect x="521.60" y="298.70" width="4.60" height="5.40"/><rect x="536.40" y="289.00" width="18.30" height="26.30" rx="5.5" ry="5.5"/><rect x="544.05" y="293.80" width="3.00" height="16.70" rx="1.5" fill="#000"/><rect x="557.70" y="289.00" width="18.30" height="26.30" rx="3.5" ry="3.5"/><rect x="557.70" y="289.00" width="5.00" height="26.30"/><rect x="565.35" y="293.50" width="3.00" height="6.00" rx="1" fill="#000"/><rect x="565.35" y="304.00" width="3.00" height="6.30" rx="1" fill="#000"/><rect x="591.30" y="289.00" width="7.70" height="26.30"/><rect x="582.00" y="289.00" width="17.00" height="5.00"/><path d="M582.00 289.00 L589.70 289.00 L589.70 310.30 L585.70 315.30 L579.00 315.30 L579.00 309.80 L582.00 308.30 Z"/><rect x="600.40" y="289.00" width="18.30" height="26.30" rx="4.5" ry="4.5"/><rect x="608.05" y="293.20" width="3.00" height="6.00" rx="1.2" fill="#000"/><rect x="608.05" y="305.00" width="11.65" height="2.20" rx="0" fill="#000"/><rect x="608.05" y="305.00" width="3.00" height="6.30" rx="1" fill="#000"/><rect x="622.50" y="289.00" width="7.70" height="26.30"/><rect x="633.80" y="289.00" width="7.70" height="26.30"/><rect x="629.70" y="298.70" width="4.60" height="5.40"/><rect x="644.50" y="289.00" width="7.50" height="26.30"/><rect x="655.30" y="289.00" width="7.50" height="26.30"/><path d="M651.50 298.50 L655.80 289.00 L655.80 305.50 L651.50 315.30 Z"/><rect x="674.80" y="289.00" width="7.70" height="26.30"/><rect x="665.00" y="289.00" width="17.50" height="15.50" rx="4" ry="4"/><rect x="672.65" y="293.60" width="2.20" height="6.00" rx="1" fill="#000"/><path d="M667.50 303.00 L676.20 303.00 L673.20 315.30 L665.00 315.30 Z"/></g></mask></defs><rect x="270" y="280" width="420" height="42" fill="url(#stp)" mask="url(#gm)"/></svg>
<div class="a" style="left:176px;top:562px;width:612px;height:11px;background:#f0f0f0;"></div>
<div class="a" style="left:175px;top:562px;width:1px;height:11px;background:#767676;"></div>
<div class="a" style="left:172px;top:573px;width:616px;height:1px;background:#d0d0d0;"></div>
<span class="t" style="left:184.44px;top:565.00px;font-size:8.14px;color:#8a8a8a;transform:scaleX(0.8626);">EPH20,M15</span>
<div class="a" style="left:229px;top:564px;width:1px;height:8px;background:#8a8a8a;"></div>
<span class="t" style="left:236.33px;top:565.00px;font-size:8.14px;color:#8a8a8a;transform:scaleX(0.8734);">MESH20,M15</span>
<div class="a" style="left:287px;top:564px;width:1px;height:8px;background:#8a8a8a;"></div>
<span class="t" style="left:294.73px;top:565.00px;font-size:8.14px;color:#8a8a8a;transform:scaleX(0.8743);">EPM20,M1</span>
<div class="a" style="left:338px;top:561px;width:56px;height:12px;background:#fff;border:1px solid #3a3a3a;border-top:none"></div>
<span class="t" style="left:344.72px;top:564.00px;font-size:8.14px;color:#101010;transform:scaleX(0.8842);">MESM20,M1</span>
<svg class="a" style="left:763px;top:565px;" width="5" height="6" viewBox="0 0 5 6"><path d="M4 0.5 L1 3 L4 5.5 Z" fill="#a0a0a0"/></svg>
<svg class="a" style="left:777px;top:565px;" width="5" height="6" viewBox="0 0 5 6"><path d="M1 0.5 L4 3 L1 5.5 Z" fill="#a0a0a0"/></svg>
<div class="a" style="left:3px;top:574px;width:785px;height:14px;background:#f0f0f0;"></div>
<span class="t" style="left:4.46px;top:578.00px;font-size:8.43px;color:#1a1a1a;transform:scaleX(0.8598);">Для вызова справки нажмите F1</span>
<div class="a" style="left:357px;top:576px;width:1px;height:11px;background:#c4c4c4;"></div>
<div class="a" style="left:437px;top:576px;width:1px;height:11px;background:#c4c4c4;"></div>
<div class="a" style="left:498px;top:576px;width:1px;height:11px;background:#c4c4c4;"></div>
<div class="a" style="left:542px;top:576px;width:1px;height:11px;background:#c4c4c4;"></div>
<div class="a" style="left:587px;top:576px;width:1px;height:11px;background:#c4c4c4;"></div>
<div class="a" style="left:629px;top:576px;width:1px;height:11px;background:#c4c4c4;"></div>
<div class="a" style="left:673px;top:576px;width:1px;height:11px;background:#c4c4c4;"></div>
<div class="a" style="left:714px;top:576px;width:1px;height:11px;background:#c4c4c4;"></div>
<span class="t" style="left:361.10px;top:578.00px;font-size:8.43px;color:#1a1a1a;transform:scaleX(0.8897);">British Pound</span>
<svg class="a" style="left:716px;top:576px;" width="12" height="12" viewBox="0 0 12 12">
<rect x="0.5" y="0.5" width="7" height="10" rx="1" fill="#5aa0e8" stroke="#2a70c0"/>
<circle cx="8" cy="8.5" r="3" fill="#e83020"/>
<path d="M6.5 8.5 H9.5" stroke="#fff"/>
</svg>
<span class="t" style="left:728.85px;top:578.00px;font-size:8.43px;color:#1a1a1a;transform:scaleX(0.8731);">46 / 4 Kb</span>
<div class="a" style="left:786px;top:582px;width:1px;height:1px;background:#a8a8a8;"></div>
<div class="a" style="left:786px;top:584px;width:1px;height:1px;background:#a8a8a8;"></div>
<div class="a" style="left:784px;top:584px;width:1px;height:1px;background:#a8a8a8;"></div>
<div class="a" style="left:786px;top:586px;width:1px;height:1px;background:#a8a8a8;"></div>
<div class="a" style="left:784px;top:586px;width:1px;height:1px;background:#a8a8a8;"></div>
<div class="a" style="left:782px;top:586px;width:1px;height:1px;background:#a8a8a8;"></div>
</body></html>
